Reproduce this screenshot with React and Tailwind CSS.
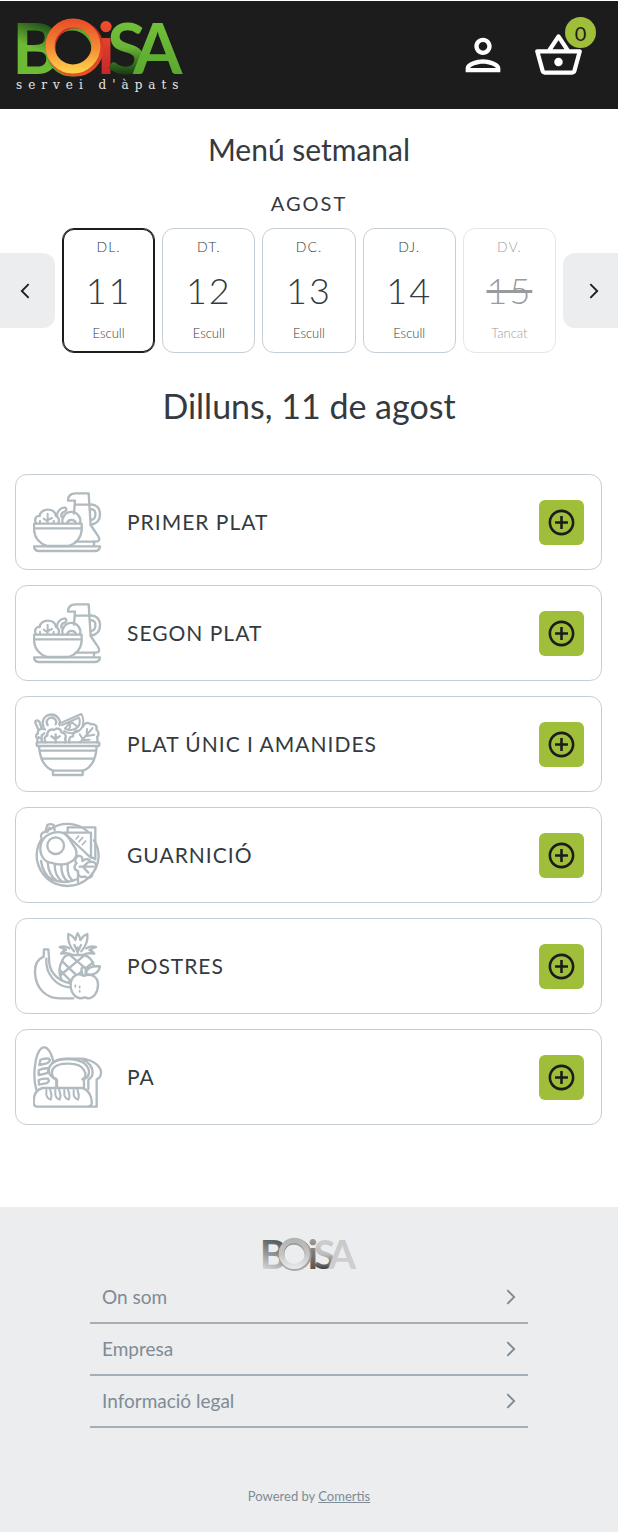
import React, { useState } from 'react'
import {
    MdOutlineAddCircleOutline,
    MdOutlineArrowBackIosNew,
    MdOutlineArrowForwardIos,
    MdOutlinePerson,
    MdOutlineShoppingBasket,
} from 'react-icons/md'

const days = [
    { name: 'DL.', number: 11, status: 'Escull' },
    { name: 'DT.', number: 12, status: 'Escull' },
    { name: 'DC.', number: 13, status: 'Escull' },
    { name: 'DJ.', number: 14, status: 'Escull' },
    { name: 'DV.', number: 15, status: 'Tancat', closed: true },
]

const footerLinks = ['On som', 'Empresa', 'Informació legal']

function LineIcon({ viewBox, children }) {
    return (
        <svg
            viewBox={viewBox}
            className="size-[70px] shrink-0 text-[#b0babf]"
            fill="none"
            stroke="currentColor"
            strokeWidth="7"
            strokeLinecap="round"
            strokeLinejoin="round"
            aria-hidden="true"
        >
            {children}
        </svg>
    )
}

function BowlJugIcon() {
    return (
        <LineIcon viewBox="99 51 210 210">
            <path d="M102 229H300Q299 243 284 243H118Q103 243 102 229Z" />
            <path d="M102 161H245V180C243 204 227 221 205 228H142C119 221 104 204 102 180ZM102 175H245" />
            <path d="M109 160C101 149 108 136 119 138C119 127 130 119 143 119C157 119 166 127 168 138C177 142 179 151 175 160" />
            <path d="M143 131V160M120 152V160M131 146L143 154M156 144L143 150M161 152V160" strokeWidth="6" />
            <path d="M171 137C171 123 183 112 195 112Q204 119 194 125C186 127 183 132 184 140" />
            <path d="M188 160A27 27 0 1 1 240 160M201 160A14 14 0 0 1 228 160" />
            <path d="M225 92H204C203 79 212 70 226 70H266L272 165L295 199Q303 214 287 215H229M225 92L222 131M224 104H268" />
            <path d="M268 104C289 101 300 115 300 133C300 151 290 162 272 164M270 118C283 116 287 124 286 134C286 144 282 149 272 150" />
            <path d="M282 215V228" />
        </LineIcon>
    )
}

function SaladIcon() {
    return (
        <LineIcon viewBox="39 28 210 210">
            <rect x="50" y="128" width="188" height="11" rx="2" />
            <path d="M57 140C60 178 73 203 99 213H190C215 203 228 178 230 140M59 153H229M64 177H223" />
            <path d="M99 213V226H188V213" />
            <path d="M54 87L46 69Q45 62 53 62L58 66L64 84" />
            <path d="M71 83A26 26 0 1 1 119 77M83 76A14 14 0 1 1 107 74" />
            <path d="M77 128C71 118 74 109 82 108C80 94 92 86 102 91C112 82 124 88 124 98C136 100 141 109 135 117Q139 123 135 128" />
            <path d="M107 104V128M94 110L107 119M119 110L107 117" />
            <path d="M75 89C62 85 51 91 54 101C46 105 47 114 53 117Q50 123 54 128M73 101L65 107V127M56 113L65 118" />
            <path d="M117 72L184 43Q194 58 187 82C177 99 153 107 132 94M126 76L177 54Q182 64 177 78C168 91 150 95 135 87M153 66L147 92M153 66L174 82M153 66L135 86" strokeWidth="6" />
            <path d="M149 128C145 118 150 109 159 110C158 98 167 91 176 94M189 80C192 70 205 66 212 74C225 71 233 80 229 90C238 97 237 108 231 112Q235 121 230 128" />
            <path d="M218 85L197 109L180 128M201 88L200 105M223 105L201 109M179 104L188 118M209 120L190 121" strokeWidth="6" />
        </LineIcon>
    )
}

function PlateIcon() {
    return (
        <LineIcon viewBox="39 30 210 210">
            <path d="M64 88A93 93 0 0 0 51 150C60 198 98 228 143 228C193 228 233 189 236 140C236 119 231 104 222 91M90 58A93 93 0 0 1 203 64" />
            <path d="M64 83C62 79 63 70 70 67L76 66L82 45Q91 40 101 45L104 61M82 66L88 53" />
            <path d="M132 70C104 60 69 74 62 105C57 132 71 158 97 159C112 165 140 167 159 151C174 139 172 119 159 104C151 92 145 78 132 70Z" />
            <circle cx="107" cy="107" r="25" />
            <path d="M132 68H213V144L137 72M143 67V52H226V148L204 136" />
            <path d="M168 87L176 78M177 95L188 83M187 104L197 93" strokeWidth="5" />
            <path d="M63 153C67 180 78 198 96 210M83 158C85 185 94 202 111 213M104 163C104 188 111 204 127 215M124 165C123 188 130 205 145 216M143 163C141 187 146 202 158 212M80 197C106 219 144 221 172 207" />
            <path d="M174 138C164 145 163 154 170 160C159 169 163 181 174 183C172 196 182 205 194 199C203 209 218 202 217 191M174 138C187 136 188 146 187 153C198 144 209 147 210 156C224 153 231 162 226 171" />
            <path d="M179 170H219M190 170L204 157M189 171L205 188M174 184V216" />
        </LineIcon>
    )
}

function FruitIcon() {
    return (
        <LineIcon viewBox="39 33 210 210">
            <path d="M72 88H85L87 111C85 151 106 181 151 190M72 88L71 110C51 118 44 135 45 158C47 205 78 236 121 235H160" />
            <path d="M79 116C76 162 108 199 149 202" />
            <path d="M125 180C116 162 117 139 127 121C132 109 142 104 152 105H193C208 109 220 124 222 140" />
            <path d="M154 104C148 99 136 99 123 101Q130 91 138 90C131 86 125 82 119 81Q134 76 148 85M192 104C199 99 211 99 223 101Q216 91 208 90C216 86 222 82 228 81Q213 76 199 85" />
            <path d="M162 94C148 78 143 59 145 42Q158 46 166 60Q168 48 173 40Q179 48 181 60Q190 46 202 42C204 59 198 78 184 94M163 75L173 96L183 75M173 99V83" />
            <path d="M127 124L179 175M121 152L148 179M193 106L122 165M219 127L147 186M151 106L201 149" />
            <path d="M190 167C171 156 152 171 152 195C152 219 167 236 184 235Q194 230 204 235C221 235 234 217 234 194C234 172 216 158 190 167Z" fill="white" />
            <path d="M186 143H197V166H188L184 150ZM198 159C200 144 215 137 240 139C237 158 221 168 199 162" fill="white" />
            <path d="M166 196V200M179 199V203M179 212V216" strokeWidth="5" />
        </LineIcon>
    )
}

function BreadIcon() {
    return (
        <LineIcon viewBox="39 22 210 210">
            <path d="M49 164C37 127 45 55 64 41Q72 35 81 41C91 50 97 65 100 81" />
            <path d="M61 76Q72 70 86 72L90 76Q87 84 80 86L58 91ZM56 107Q69 100 84 101L86 109Q83 116 76 117L56 121ZM56 136Q69 131 84 132L87 139Q84 145 77 146L57 150Z" />
            <path d="M109 159V133C94 130 83 116 87 101C94 79 119 73 145 73C177 73 202 86 207 108C208 121 202 130 192 133V159" />
            <path d="M111 159V137C96 130 90 112 101 100C114 82 179 81 191 105C201 120 196 130 187 134" />
            <path d="M97 84C111 73 126 72 141 72H181C213 73 239 90 243 110C244 124 238 131 230 134V216H208M189 76C207 82 218 98 218 113C218 124 212 131 205 135V163" />
            <path d="M68 160H185C205 163 217 187 215 207Q213 215 202 216H50Q40 214 41 201C41 178 49 164 68 160Z" />
            <path d="M79 166V180Q80 190 92 195Q97 184 92 172L90 164M106 166V180Q107 190 119 195Q124 184 119 172L117 164M133 166V180Q134 190 146 195Q151 184 146 172L144 164M161 166V180Q162 190 174 195Q179 184 174 172L172 164" strokeWidth="6" />
        </LineIcon>
    )
}

const courses = [
    { title: 'PRIMER PLAT', Icon: BowlJugIcon },
    { title: 'SEGON PLAT', Icon: BowlJugIcon },
    { title: 'PLAT ÚNIC I AMANIDES', Icon: SaladIcon },
    { title: 'GUARNICIÓ', Icon: PlateIcon },
    { title: 'POSTRES', Icon: FruitIcon },
    { title: 'PA', Icon: BreadIcon },
]

const logoTones = {
    color: {
        b: ['#1f4d17', '#6dbb35', '#6dbb35'],
        ring: ['#e8502a', '#f58a35', '#ffd94a'],
        shade: ['#c8281f', '#e8502a'],
        i: ['#f0502c', '#c6262b'],
        s: ['#72c03a', '#6ab435', '#173d12'],
        a: ['#72c03a', '#5aa82f'],
        under: '#5aa82f',
    },
    gray: {
        b: ['#555555', '#969696', '#d6d6d6'],
        ring: ['#b4b4b4', '#c4c4c4', '#ececec'],
        shade: ['#858585', '#a8a8a8'],
        i: ['#9a9a9a', '#555555'],
        s: ['#d0d0d0', '#bdbdbd', '#3d3d3d'],
        a: ['#c9c9c9', '#cfcfcf'],
        under: '#a0a0a0',
    },
}

function Gradient({ id, colors, x1 = 0, x2 = 0 }) {
    return (
        <linearGradient id={id} gradientUnits="userSpaceOnUse" x1={x1} y1="4" x2={x2} y2="57">
            {colors.map((color, i) => (
                <stop key={i} offset={i / (colors.length - 1)} stopColor={color} />
            ))}
        </linearGradient>
    )
}

function Logo({ tone, className }) {
    const t = logoTones[tone]

    return (
        <svg viewBox="0 0 166 60" className={`overflow-visible ${className}`} role="img" aria-label="Boisa">
            <defs>
                <Gradient id={`${tone}-b`} colors={t.b} x1={24} x2={4} />
                <Gradient id={`${tone}-ring`} colors={t.ring} />
                <Gradient id={`${tone}-shade`} colors={t.shade} />
                <Gradient id={`${tone}-i`} colors={t.i} />
                <Gradient id={`${tone}-s`} colors={t.s} />
                <Gradient id={`${tone}-a`} colors={t.a} />
            </defs>
            <text y="57" className="font-[Lato,sans-serif] text-[71px] font-bold">
                <tspan x="-4" fill={`url(#${tone}-b)`}>B</tspan>
                <tspan x="81" fill={`url(#${tone}-i)`}>i</tspan>
                <tspan x="91" fill={`url(#${tone}-s)`}>S</tspan>
                <tspan x="117" fill={`url(#${tone}-a)`}>A</tspan>
            </text>
            <circle cx="56" cy="33" r="23" fill="none" stroke={t.under} strokeWidth="7" />
            <circle cx="59" cy="31" r="24" fill="none" stroke={`url(#${tone}-shade)`} strokeWidth="9" />
            <circle cx="57" cy="29" r="23" fill="none" stroke={`url(#${tone}-ring)`} strokeWidth="9" />
        </svg>
    )
}

function Header() {
    return (
        <header className="mt-px flex h-[108px] items-start justify-between bg-[#1c1c1c] px-4">
            <a href="#inici" className="mt-4 flex flex-col text-white">
                <Logo tone="color" className="h-[60px] w-[166px]" />
                <span className="font-['DejaVu_Serif',serif] text-[12px] leading-4 tracking-[6px] text-white/90">servei d'àpats</span>
            </a>
            <div className="mt-7 mr-[18px] flex gap-6 text-white">
                <button type="button" aria-label="El meu compte">
                    <MdOutlinePerson className="size-[52px]" />
                </button>
                <button type="button" aria-label="Cistella" className="relative">
                    <MdOutlineShoppingBasket className="size-[51px]" />
                    <span className="absolute -top-3 -right-3 flex size-[31px] items-center justify-center rounded-full bg-[#9fbf3b] text-[20px] leading-none text-[#1c1c1c]">
                        0
                    </span>
                </button>
            </div>
        </header>
    )
}

function DayCard({ day, selected, onSelect }) {
    return (
        <button
            type="button"
            disabled={day.closed}
            aria-pressed={selected}
            onClick={onSelect}
            className={`flex h-[125px] flex-col items-center justify-between rounded-xl border pt-2 pb-[9px] text-[#343a40] ${selected ? 'border-[#1c1c1c] inset-ring inset-ring-[#1c1c1c]' : 'border-[#c5ced5]'
                } ${day.closed ? 'opacity-50' : ''}`}
        >
            <span className="text-[14px] leading-5 font-light tracking-[1px]">{day.name}</span>
            <span className={`text-[36px] leading-[44px] font-light tracking-[2px] ${day.closed ? 'line-through' : ''}`}>
                {day.number}
            </span>
            <span className="text-[13px] leading-5 font-light">{day.status}</span>
        </button>
    )
}

function DayPicker({ selected, setSelected }) {
    return (
        <div className="mt-[13px] flex items-center gap-[7px]">
            <button
                type="button"
                aria-label="Dies anteriors"
                className="flex h-[75px] w-[55px] items-center justify-center rounded-r-xl bg-[#ebedee] pr-1.5 text-[#1c1c1c]"
            >
                <MdOutlineArrowBackIosNew className="size-[18px]" />
            </button>
            <div className="grid flex-1 grid-cols-5 gap-[7px]">
                {days.map((day) => (
                    <DayCard
                        key={day.number}
                        day={day}
                        selected={day.number === selected}
                        onSelect={() => setSelected(day.number)}
                    />
                ))}
            </div>
            <button
                type="button"
                aria-label="Dies següents"
                className="flex h-[75px] w-[55px] items-center justify-center rounded-l-xl bg-[#ebedee] pl-1.5 text-[#1c1c1c]"
            >
                <MdOutlineArrowForwardIos className="size-[18px]" />
            </button>
        </div>
    )
}

function CourseRow({ title, Icon }) {
    return (
        <li className="flex h-24 items-center rounded-xl border border-[#c5ced5] px-[17px]">
            <Icon />
            <h3 className="ml-6 flex-1 text-[21px] leading-7 tracking-[1px]">{title}</h3>
            <button
                type="button"
                aria-label={`Obre ${title}`}
                className="flex size-[45px] items-center justify-center rounded-md bg-[#9fbf3b] text-[#1c1c1c]"
            >
                <MdOutlineAddCircleOutline className="size-[31px]" />
            </button>
        </li>
    )
}

function Footer() {
    return (
        <footer className="mt-[82px] flex flex-col bg-[#ebedee] px-[90px] pt-[30px] pb-[26px] text-[#7f8b96]">
            <Logo tone="gray" className="h-[34px] w-[94px] self-center" />
            <nav className="mt-px">
                {footerLinks.map((label) => (
                    <a
                        key={label}
                        href="#peu"
                        className="flex h-[52px] items-center justify-between border-b-2 border-[#a5afb7] pr-2 pl-3 text-[19px]"
                    >
                        {label}
                        <MdOutlineArrowForwardIos className="size-[18px]" />
                    </a>
                ))}
            </nav>
            <p className="mt-[58px] text-center text-[13px] leading-5">
                Powered by <a href="#comertis" className="underline">Comertis</a>
            </p>
        </footer>
    )
}

function App() {
    const [ selected, setSelected ] = useState(11)

    return (
        <div className="flow-root bg-white font-[Lato,sans-serif] text-[#343a40]">
            <Header />
            <main>
                <h1 className="mt-5 text-center text-[30px] leading-10">Menú setmanal</h1>
                <p className="mt-[22px] text-center text-[20px] leading-6 tracking-[2px]">AGOST</p>
                <DayPicker selected={selected} setSelected={setSelected} />
                <h2 className="mt-[31px] text-center text-[34px] leading-[44px]">Dilluns, {selected} de agost</h2>
                <ul className="mt-[46px] mr-4 ml-[15px] flex flex-col gap-[15px]">
                    {courses.map((course) => (
                        <CourseRow key={course.title} {...course} />
                    ))}
                </ul>
            </main>
            <Footer />
        </div>
    )
}

export default App
